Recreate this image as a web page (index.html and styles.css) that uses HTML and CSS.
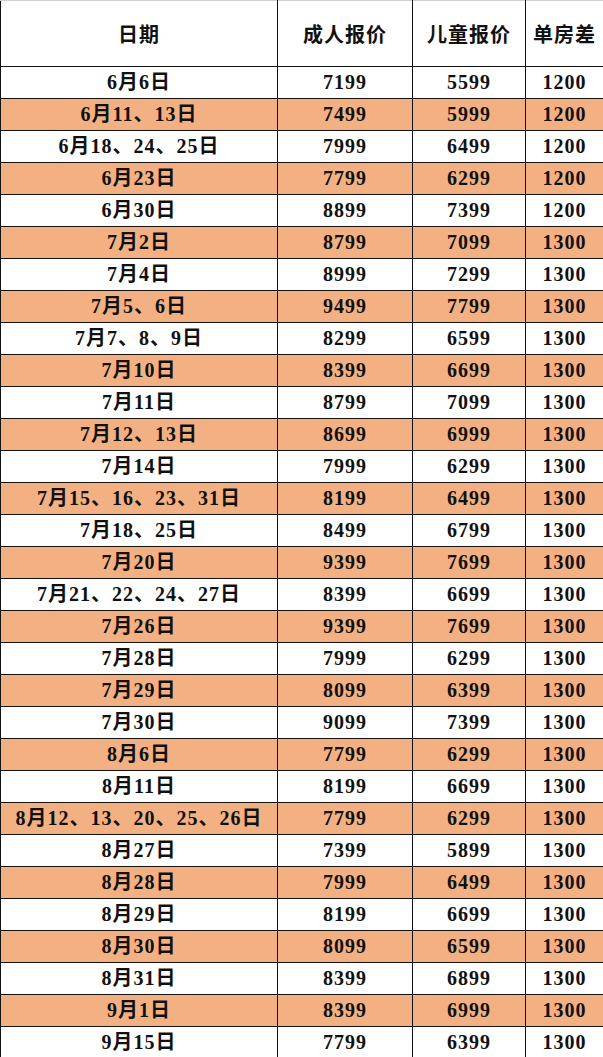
FILE: index.html
```html
<!DOCTYPE html>
<html lang="zh">
<head>
<meta charset="utf-8">
<link rel="stylesheet" href="styles.css">
</head>
<body>
<table class="price">
<colgroup><col class="c1"><col class="c2"><col class="c3"><col class="c4"></colgroup>
<thead>
<tr class="head"><th>日期</th><th>成人报价</th><th>儿童报价</th><th>单房差</th></tr>
</thead>
<tbody>
<tr><td>6月6日</td><td>7199</td><td>5599</td><td>1200</td></tr>
<tr class="alt"><td>6月11、13日</td><td>7499</td><td>5999</td><td>1200</td></tr>
<tr><td>6月18、24、25日</td><td>7999</td><td>6499</td><td>1200</td></tr>
<tr class="alt"><td>6月23日</td><td>7799</td><td>6299</td><td>1200</td></tr>
<tr><td>6月30日</td><td>8899</td><td>7399</td><td>1200</td></tr>
<tr class="alt"><td>7月2日</td><td>8799</td><td>7099</td><td>1300</td></tr>
<tr><td>7月4日</td><td>8999</td><td>7299</td><td>1300</td></tr>
<tr class="alt"><td>7月5、6日</td><td>9499</td><td>7799</td><td>1300</td></tr>
<tr><td>7月7、8、9日</td><td>8299</td><td>6599</td><td>1300</td></tr>
<tr class="alt"><td>7月10日</td><td>8399</td><td>6699</td><td>1300</td></tr>
<tr><td>7月11日</td><td>8799</td><td>7099</td><td>1300</td></tr>
<tr class="alt"><td>7月12、13日</td><td>8699</td><td>6999</td><td>1300</td></tr>
<tr><td>7月14日</td><td>7999</td><td>6299</td><td>1300</td></tr>
<tr class="alt"><td>7月15、16、23、31日</td><td>8199</td><td>6499</td><td>1300</td></tr>
<tr><td>7月18、25日</td><td>8499</td><td>6799</td><td>1300</td></tr>
<tr class="alt"><td>7月20日</td><td>9399</td><td>7699</td><td>1300</td></tr>
<tr><td>7月21、22、24、27日</td><td>8399</td><td>6699</td><td>1300</td></tr>
<tr class="alt"><td>7月26日</td><td>9399</td><td>7699</td><td>1300</td></tr>
<tr><td>7月28日</td><td>7999</td><td>6299</td><td>1300</td></tr>
<tr class="alt"><td>7月29日</td><td>8099</td><td>6399</td><td>1300</td></tr>
<tr><td>7月30日</td><td>9099</td><td>7399</td><td>1300</td></tr>
<tr class="alt"><td>8月6日</td><td>7799</td><td>6299</td><td>1300</td></tr>
<tr><td>8月11日</td><td>8199</td><td>6699</td><td>1300</td></tr>
<tr class="alt"><td>8月12、13、20、25、26日</td><td>7799</td><td>6299</td><td>1300</td></tr>
<tr><td>8月27日</td><td>7399</td><td>5899</td><td>1300</td></tr>
<tr class="alt"><td>8月28日</td><td>7999</td><td>6499</td><td>1300</td></tr>
<tr><td>8月29日</td><td>8199</td><td>6699</td><td>1300</td></tr>
<tr class="alt"><td>8月30日</td><td>8099</td><td>6599</td><td>1300</td></tr>
<tr><td>8月31日</td><td>8399</td><td>6899</td><td>1300</td></tr>
<tr class="alt"><td>9月1日</td><td>8399</td><td>6999</td><td>1300</td></tr>
<tr><td>9月15日</td><td>7799</td><td>6399</td><td>1300</td></tr>
</tbody>
</table>
</body>
</html>
```
FILE: styles.css
```css
html, body {
  margin: 0;
  padding: 0;
  background: #fff;
}
.price {
  width: 603px;
  border-collapse: collapse;
  table-layout: fixed;
  font-family: "Liberation Serif", "Noto Sans CJK SC", serif;
  font-weight: bold;
  font-size: 20px;
  color: #111;
  letter-spacing: 1px;
}
.c1 { width: 277px; }
.c2 { width: 135px; }
.c3 { width: 113px; }
.c4 { width: 78px; }
.price th, .price td {
  border: 1px solid #111;
  padding: 0;
  text-align: center;
  white-space: nowrap;
  overflow: hidden;
}
.price th {
  font-family: "Noto Sans CJK SC", sans-serif;
  font-weight: bold;
  font-size: 20px;
  height: 65px;
  border-top: 1px solid #d0d0d0;
}
.price td {
  height: 31px;
  line-height: 31px;
}
.price tr.alt td {
  background: #f3b183;
}
```
